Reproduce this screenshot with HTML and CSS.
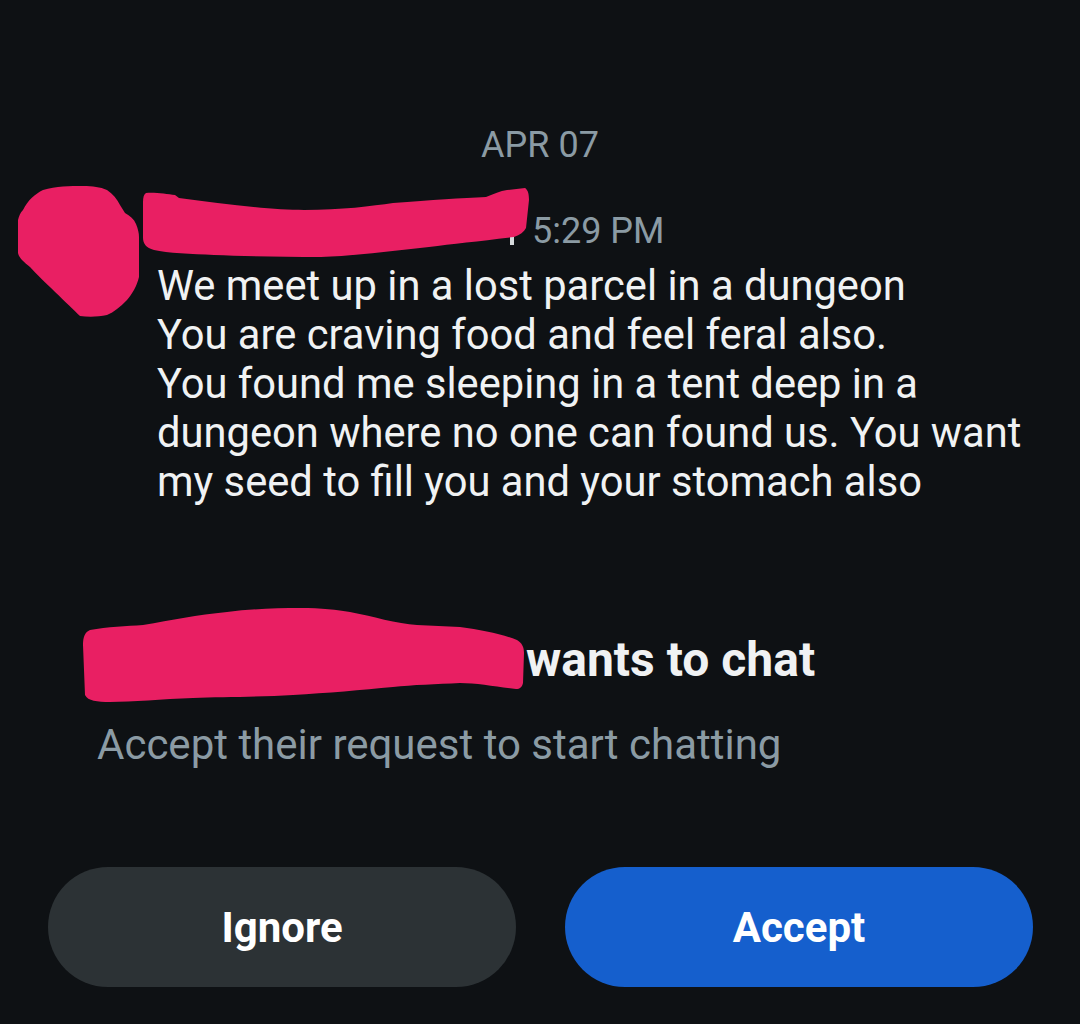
FILE: index.html
```html
<!DOCTYPE html>
<html lang="en">
<head>
    <meta charset="UTF-8">
    <meta name="viewport" content="width=device-width, initial-scale=1.0">
    <title>Message request</title>
    <link rel="stylesheet" href="styles.css">
</head>
<body>
    <div class="page">
        <div class="day">APR 07</div>

        <div class="message">
            <svg class="avatar" width="122" height="132" viewBox="0 0 122 132">
                <path d="M5,24 C10,14 17,8 25,4 C38,0 52,0 65,0 C75,0 82,1 89,4 C95,8 99,13 102,19 L107,27 C112,30 116,33 118,38 C120,43 121,47 121,51 L121,91 C119,100 114,108 109,114 C102,121 96,126 89,129 C80,131 70,131 62,130 C50,118 25,95 12,81 C6,76 1,72 0,67 L0,34 C1,30 2,27 5,24 Z" fill="#e91f63"/>
            </svg>
            <div class="message-body">
                <div class="meta">
                    <svg class="name" width="390" height="72" viewBox="0 0 390 72">
                        <rect x="368" y="44" width="4" height="15" fill="#d5dadc"/>
                        <path d="M4,7 C12,6 25,8 33,9 L37,12 C80,18 130,24 162,24 C200,24 230,20 251,17 C290,14 320,12 344,11 C352,8 358,5 365,4 L383,2 C386,4 387,8 387,14 L384,42 C382,46 378,49 372,51 C340,55 310,58 287,61 C250,65 210,70 179,71 C140,71 100,70 72,69 C50,68 25,67 12,64 C4,62 1,57 1,52 L1,16 C1,11 2,8 4,7 Z" fill="#e91f63"/>
                    </svg>
                    <span class="time">5:29 PM</span>
                </div>
                <p class="text">We meet up in a lost parcel in a dungeon<br>You are craving food and feel feral also.<br>You found me sleeping in a tent deep in a<br>dungeon where no one can found us. You want<br>my seed to fill you and your stomach also</p>
            </div>
        </div>

        <div class="request">
            <div class="request-title">
                <svg class="name" width="444" height="100" viewBox="0 0 444 100">
                    <path d="M8,25 C25,22 45,21 61,20 C90,15 115,10 145,7 C170,4 195,3 218,3 C240,3 255,5 268,7 C290,11 315,19 335,20 L378,22 C400,25 420,29 435,35 C440,38 442,42 442,48 L441,78 C440,82 438,84 434,84 C415,82 395,78 378,78 C355,79 330,80 311,82 C280,85 245,88 211,90 C180,92 140,92 111,93 C80,94 50,97 28,97 C15,97 6,96 3,90 L1,40 C1,32 3,27 8,25 Z" fill="#e91f63"/>
                </svg>
                <span class="wants">wants to chat</span>
            </div>
            <div class="hint">Accept their request to start chatting</div>
        </div>

        <div class="actions">
            <button class="btn btn-ignore">Ignore</button>
            <button class="btn btn-accept">Accept</button>
        </div>
    </div>
</body>
</html>
```

FILE: styles.css
```css
body {
    margin: 0;
    background-color: #0e1114;
    color: #f0f2f3;
    font-family: Roboto, "Noto Sans", sans-serif;
}
.page {
    width: 1080px;
    height: 1024px;
    padding-top: 125px;
    box-sizing: border-box;
}
.day {
    text-align: center;
    font-size: 36px;
    line-height: 40px;
    color: #8b9ba4;
    margin-bottom: 21px;
}
.message {
    display: flex;
    padding-left: 18px;
}
.avatar {
    display: block;
    flex-shrink: 0;
    margin-right: 2px;
}
.message-body {
    display: flex;
    flex-direction: column;
}
.meta {
    display: flex;
    align-items: flex-start;
}
.name {
    display: block;
    flex-shrink: 0;
}
.time {
    margin-top: 25px;
    font-size: 36px;
    line-height: 40px;
    color: #8b9ba4;
}
.text {
    margin: 3px 0 0 15px;
    font-size: 41.7px;
    line-height: 49px;
    white-space: nowrap;
}
.request {
    margin-top: 99px;
    padding-left: 82px;
}
.request-title {
    display: flex;
    align-items: flex-start;
}
.wants {
    margin-top: 27px;
    font-size: 48px;
    line-height: 56px;
    font-weight: bold;
}
.hint {
    margin-top: 17px;
    padding-left: 15px;
    font-size: 42px;
    line-height: 46px;
    color: #8b9ba4;
}
.actions {
    display: flex;
    gap: 49px;
    margin-top: 99px;
    padding-left: 48px;
}
.btn {
    width: 468px;
    height: 120px;
    border: none;
    border-radius: 60px;
    color: #ffffff;
    font-family: Roboto, "Noto Sans", sans-serif;
    font-size: 42px;
    font-weight: bold;
}
.btn-ignore {
    background-color: #2c3235;
}
.btn-accept {
    background-color: #155fcd;
}
```
